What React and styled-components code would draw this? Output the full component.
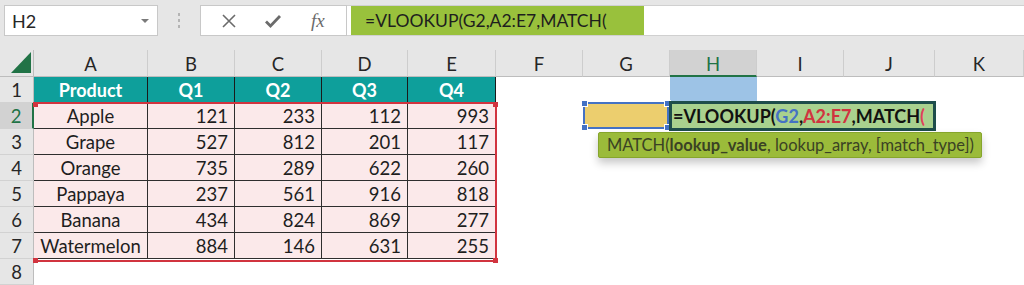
import React from "react";
import styled, { createGlobalStyle } from "styled-components";

const COLS = ["A", "B", "C", "D", "E", "F", "G", "H", "I", "J", "K"];
const ROWS = [
  ["Apple", 121, 233, 112, 993],
  ["Grape", 527, 812, 201, 117],
  ["Orange", 735, 289, 622, 260],
  ["Pappaya", 237, 561, 916, 818],
  ["Banana", 434, 824, 869, 277],
  ["Watermelon", 884, 146, 631, 255],
];

const App = () => {
  return (
    <Page>
      <GlobalStyle />
      <TopBar>
        <NameBox>
          <span>H2</span>
          <Caret />
        </NameBox>
        <Grip>
          <i />
          <i />
          <i />
        </Grip>
        <ButtonBox>
          <IconButton>
            <svg width="16" height="16" viewBox="0 0 16 16">
              <path d="M2 2 L14 14 M14 2 L2 14" stroke="#6b6b6b" strokeWidth="1.6" fill="none" />
            </svg>
          </IconButton>
          <IconButton>
            <svg width="18" height="16" viewBox="0 0 18 16">
              <path d="M2 8.5 L6.5 13 L16 3" stroke="#6b6b6b" strokeWidth="2.8" fill="none" />
            </svg>
          </IconButton>
          <FxLabel>fx</FxLabel>
        </ButtonBox>
        <FormulaInput>
          <FormulaText>=VLOOKUP(G2,A2:E7,MATCH(</FormulaText>
        </FormulaInput>
      </TopBar>

      <Sheet>
        <Corner>
          <svg width="20" height="21" viewBox="0 0 20 21">
            <polygon points="20,0 20,21 0,21" fill="#217346" />
          </svg>
        </Corner>
        {COLS.map((c) => (
          <ColHead key={c} $active={c === "H"}>
            {c}
          </ColHead>
        ))}

        <RowHead>1</RowHead>
        {["Product", "Q1", "Q2", "Q3", "Q4"].map((h) => (
          <HeadCell key={h}>{h}</HeadCell>
        ))}
        <Blank />
        <Blank />
        <Blank $fill="#9dc3e6" />
        <Blank />
        <Blank />
        <Blank />

        {ROWS.map((r, i) => (
          <React.Fragment key={r[0]}>
            <RowHead $active={i === 0}>{i + 2}</RowHead>
            <DataCell $center>{r[0]}</DataCell>
            {r.slice(1).map((v, j) => (
              <DataCell key={j}>{v}</DataCell>
            ))}
            {[0, 1, 2, 3, 4, 5].map((k) => (
              <Blank key={k} />
            ))}
          </React.Fragment>
        ))}

        <RowHead>8</RowHead>
        {COLS.map((c) => (
          <Blank key={c} />
        ))}

        <RangeMarquee>
          <Knob style={{ left: -2, top: -2 }} />
          <Knob style={{ right: -3, top: -2 }} />
          <Knob style={{ left: -2, bottom: -3 }} />
          <Knob style={{ right: -3, bottom: -3 }} />
        </RangeMarquee>

        <LookupCell>
          <Handle style={{ left: -4, top: -4 }} />
          <Handle style={{ right: -4, top: -4 }} />
          <Handle style={{ left: -4, bottom: -4 }} />
          <Handle style={{ right: -4, bottom: -4 }} />
        </LookupCell>

        <Editor>
          =VLOOKUP(<Ref $c="#4472c4">G2</Ref>,<Ref $c="#d1343f">A2:E7</Ref>,MATCH
          <Ref $c="#e0405a">(</Ref>
        </Editor>

        <Tip>
          MATCH(<b>lookup_value</b>, lookup_array, [match_type])
        </Tip>
      </Sheet>
    </Page>
  );
};

const GlobalStyle = createGlobalStyle`
  html, body {
    margin: 0;
    padding: 0;
    background: #ffffff;
  }
  body {
    font-family: Lato, "Open Sans", sans-serif;
    color: #1e1e1e;
  }
`;

const Page = styled.div`
  width: 1024px;
  height: 285px;
  overflow: hidden;
`;

const TopBar = styled.div`
  height: 50px;
  background: #e6e6e6;
  display: flex;
  align-items: flex-start;
  padding: 5px 0 0 4px;
  box-sizing: border-box;
`;

const NameBox = styled.div`
  width: 154px;
  height: 31px;
  box-sizing: border-box;
  background: #ffffff;
  border: 1px solid #c8c8c8;
  display: flex;
  align-items: center;
  justify-content: space-between;
  padding: 0 8px 0 7px;
  font-size: 18px;
  color: #262626;
`;

const Caret = styled.span`
  width: 0;
  height: 0;
  border-left: 4px solid transparent;
  border-right: 4px solid transparent;
  border-top: 4px solid #7a7a7a;
`;

const Grip = styled.div`
  width: 42px;
  height: 31px;
  display: flex;
  flex-direction: column;
  align-items: center;
  justify-content: center;
  gap: 3px;

  i {
    width: 2px;
    height: 3px;
    background: #b4b4b4;
  }
`;

const ButtonBox = styled.div`
  width: 147px;
  height: 31px;
  box-sizing: border-box;
  background: #ffffff;
  border: 1px solid #c8c8c8;
  display: flex;
  align-items: center;
  justify-content: space-around;
  padding: 0 6px;
`;

const IconButton = styled.span`
  display: flex;
  align-items: center;
  justify-content: center;
  width: 30px;
`;

const FxLabel = styled.span`
  font-family: "Liberation Serif", serif;
  font-style: italic;
  font-size: 19px;
  color: #6b6b6b;
  width: 30px;
  text-align: center;
`;

const FormulaInput = styled.div`
  flex: 1;
  height: 31px;
  box-sizing: border-box;
  background: #ffffff;
  border-top: 1px solid #d0d0d0;
  border-bottom: 1px solid #d0d0d0;
  padding: 0 0 0 4px;
  display: flex;
  align-items: stretch;
`;

const FormulaText = styled.div`
  width: 293px;
  box-sizing: border-box;
  background: #99c13c;
  padding-left: 14px;
  font-size: 17.5px;
  line-height: 29px;
  color: #1e1e1e;
  white-space: nowrap;
`;

const Sheet = styled.div`
  position: relative;
  display: grid;
  grid-template-columns: 34px 114px 87px 87px 86px 88px 87px 87px 87px 87px 91px 1fr;
  grid-template-rows: 27px repeat(8, 26px);
  font-size: 18.5px;
`;

const Corner = styled.div`
  background: #e6e6e6;
  border-right: 1px solid #bdbdbd;
  border-bottom: 1px solid #bdbdbd;
  display: flex;
  align-items: flex-end;
  justify-content: flex-end;
  padding: 0 2px 3px 0;
`;

const ColHead = styled.div`
  background: ${(p) => (p.$active ? "#d2d2d2" : "#e6e6e6")};
  color: ${(p) => (p.$active ? "#217346" : "#262626")};
  border-right: 1px solid #cdcdcd;
  border-bottom: ${(p) => (p.$active ? "2px solid #217346" : "1px solid #bdbdbd")};
  display: flex;
  align-items: center;
  justify-content: center;
  padding-top: 2px;
`;

const RowHead = styled.div`
  background: ${(p) => (p.$active ? "#d2d2d2" : "#e6e6e6")};
  color: ${(p) => (p.$active ? "#217346" : "#262626")};
  border-right: ${(p) => (p.$active ? "2px solid #217346" : "1px solid #bdbdbd")};
  border-bottom: 1px solid #d2d2d2;
  display: flex;
  align-items: center;
  justify-content: center;
`;

const HeadCell = styled.div`
  background: #0e9f9b;
  color: #ffffff;
  font-weight: 700;
  font-size: 18px;
  border-right: 1px solid #1a1a1a;
  display: flex;
  align-items: center;
  justify-content: center;
`;

const DataCell = styled.div`
  background: #fbe9ea;
  border-right: 1px solid #2e2e2e;
  border-bottom: 1px solid #2e2e2e;
  display: flex;
  align-items: center;
  justify-content: ${(p) => (p.$center ? "center" : "flex-end")};
  padding: 0 6px;
  color: #1e1e1e;
`;

const Blank = styled.div`
  background: ${(p) => p.$fill || "#ffffff"};
`;

const RangeMarquee = styled.div`
  position: absolute;
  left: 35px;
  top: 52px;
  width: 460px;
  height: 156px;
  border: 2px solid #d1343f;
  border-left: none;
  pointer-events: none;
`;

const Knob = styled.span`
  position: absolute;
  width: 5px;
  height: 5px;
  background: #d1343f;
`;

const LookupCell = styled.div`
  position: absolute;
  left: 583px;
  top: 52px;
  width: 86px;
  height: 27px;
  box-sizing: border-box;
  background: #ecce6e;
  border: 2px solid #4472c4;
`;

const Handle = styled.span`
  position: absolute;
  width: 5px;
  height: 5px;
  background: #4472c4;
  border: 1px solid #ffffff;
`;

const Editor = styled.div`
  position: absolute;
  left: 669px;
  top: 51px;
  width: 267px;
  height: 30px;
  box-sizing: border-box;
  background: #a9d18e;
  border: 3px solid #1e4d4b;
  font-weight: 700;
  font-size: 18px;
  line-height: 24px;
  padding-left: 1px;
  white-space: nowrap;
  color: #111111;
`;

const Ref = styled.span`
  color: ${(p) => p.$c};
`;

const Tip = styled.div`
  position: absolute;
  left: 598px;
  top: 82px;
  width: 384px;
  height: 26px;
  box-sizing: border-box;
  background: #9bbb3a;
  border: 1px solid #86a52c;
  border-radius: 2px;
  box-shadow: 0 5px 9px rgba(0, 0, 0, 0.22);
  padding-left: 8px;
  font-size: 16.5px;
  line-height: 24px;
  color: #3a4224;
  white-space: nowrap;

  b {
    font-weight: 700;
  }
`;

export default App;
